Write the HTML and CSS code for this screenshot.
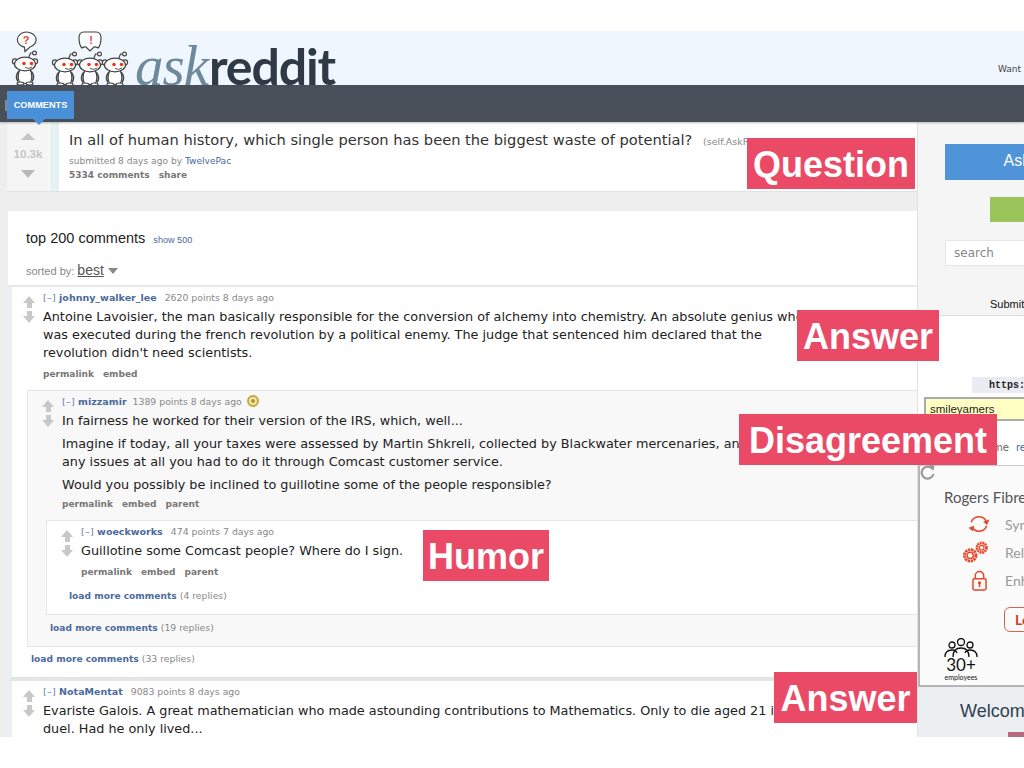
FILE: index.html
```html
<!DOCTYPE html>
<html lang="en">
<head>
<meta charset="utf-8">
<title>AskReddit</title>
<link rel="stylesheet" href="styles.css">
</head>
<body>
<div class="shot">
  <svg width="0" height="0" class="defs">
    <defs>
      <g id="snoo" fill="#fff" stroke="#444" stroke-width="1.200">
        <path d="M3.500 -6 L5.500 -11 L8 -11" fill="none"/>
        <circle cx="9.500" cy="-11" r="1.900"/>
        <path d="M-5 5 C-8 11 -7 17 -4.500 19.500 L4.500 19.500 C7 17 8 11 5 5 Z"/>
        <path d="M-6 7 Q-10.500 12 -7 17.500 M6 7 Q10.500 12 7 17.500" fill="none" stroke-width="1.600"/>
        <ellipse cx="-4.500" cy="19.500" rx="3.500" ry="1.500"/>
        <ellipse cx="4.500" cy="19.500" rx="3.500" ry="1.500"/>
        <circle cx="-10" cy="-2.500" r="2.600"/>
        <circle cx="10" cy="-2.500" r="2.600"/>
        <ellipse cx="0" cy="0" rx="10.500" ry="6.800"/>
        <circle cx="-1" cy="-0.500" r="1.800" fill="#e8391f" stroke="none"/>
        <circle cx="6.500" cy="-0.500" r="1.800" fill="#e8391f" stroke="none"/>
        <path d="M0 3.500 Q4 5.500 7 3" fill="none" stroke-width="0.900"/>
      </g>
    </defs>
  </svg>
  <header class="site-head">
    <svg class="snoos" width="130" height="54" viewBox="0 31 130 54">
      <path class="bubble" d="M26 32 a10 7.800 0 0 1 4 15 l-5 4.500 l-.5 -4.300 a10 7.800 0 0 1 1.500 -15.200 Z"/>
      <text class="bubble-mark" x="26" y="44">?</text>
      <path class="bubble" d="M86 32 h10 q5 0 5 6 q0 7 -3 10 q-3 -1.500 -4 -1 l-4 4 l-4 -4 q-2 -.5 -4 1 q-3 -3 -3 -10 q0 -6 5 -6 Z"/>
      <text class="bubble-mark" x="91" y="44">!</text>
      <use href="#snoo" x="25" y="64"/>
      <use href="#snoo" x="65" y="65"/>
      <use href="#snoo" x="90" y="65"/>
      <use href="#snoo" x="115" y="65"/>
    </svg>
    <div class="wordmark"><span class="wm-ask">ask</span><span class="wm-reddit">reddit</span></div>
    <div class="want">Want to join?</div>
  </header>
  <nav class="site-nav"><span class="nav-stub"></span></nav>
  <a class="tab">COMMENTS</a>

  <div class="page">
    <main class="main">
      <section class="post">
        <div class="post-vote">
          <span class="tri tri-up"></span>
          <span class="score">10.3k</span>
          <span class="tri tri-down"></span>
        </div>
        <div class="post-body">
          <div class="post-title">In all of human history, which single person has been the biggest waste of potential? <span class="domain">(self.AskReddit)</span></div>
          <div class="post-meta">submitted 8 days ago by <a class="link">TwelvePac</a></div>
          <div class="links"><span>5334 comments</span><span>share</span></div>
        </div>
      </section>

      <section class="panel">
        <div class="panel-title">top 200 comments <a class="show">show 500</a></div>
        <div class="sort">sorted by: <u class="sort-val">best</u> <span class="sort-caret"></span></div>
      </section>

      <section class="thread">
        <article class="comment">
          <div class="votes"><span class="arrow"></span><span class="arrow arrow-down"></span></div>
          <div class="entry">
            <div class="tagline"><span class="toggle">[–]</span> <a class="author">johnny_walker_lee</a> <span class="pts">2620 points 8 days ago</span></div>
            <p class="text">Antoine Lavoisier, the man basically responsible for the conversion of alchemy into chemistry. An absolute genius who<br>was executed during the french revolution by a political enemy. The judge that sentenced him declared that the<br>revolution didn't need scientists.</p>
            <div class="links"><span>permalink</span><span>embed</span></div>
          </div>
        </article>

        <div class="child level-1">
          <article class="comment">
            <div class="votes"><span class="arrow"></span><span class="arrow arrow-down"></span></div>
            <div class="entry">
              <div class="tagline"><span class="toggle">[–]</span> <a class="author">mizzamir</a> <span class="pts pts-tight">1389 points 8 days ago</span> <span class="gold"></span></div>
              <p class="text">In fairness he worked for their version of the IRS, which, well...</p>
              <p class="text para">Imagine if today, all your taxes were assessed by Martin Shkreli, collected by Blackwater mercenaries, and<br>any issues at all you had to do it through Comcast customer service.</p>
              <p class="text para">Would you possibly be inclined to guillotine some of the people responsible?</p>
              <div class="links"><span>permalink</span><span>embed</span><span>parent</span></div>
            </div>
          </article>

          <div class="child level-2">
            <article class="comment">
              <div class="votes"><span class="arrow"></span><span class="arrow arrow-down"></span></div>
              <div class="entry">
                <div class="tagline"><span class="toggle">[–]</span> <a class="author">woeckworks</a> <span class="pts">474 points 7 days ago</span></div>
                <p class="text">Guillotine some Comcast people? Where do I sign.</p>
                <div class="links"><span>permalink</span><span>embed</span><span>parent</span></div>
              </div>
            </article>
            <div class="more more-3"><a class="author">load more comments</a> <span class="pts">(4 replies)</span></div>
          </div>
          <div class="more more-2"><a class="author">load more comments</a> <span class="pts">(19 replies)</span></div>
        </div>
        <div class="more more-1"><a class="author">load more comments</a> <span class="pts">(33 replies)</span></div>
      </section>

      <section class="thread thread-next">
        <article class="comment">
          <div class="votes"><span class="arrow"></span><span class="arrow arrow-down"></span></div>
          <div class="entry">
            <div class="tagline"><span class="toggle">[–]</span> <a class="author">NotaMentat</a> <span class="pts">9083 points 8 days ago</span></div>
            <p class="text">Evariste Galois. A great mathematician who made astounding contributions to Mathematics. Only to die aged 21 in a<br>duel. Had he only lived...</p>
          </div>
        </article>
      </section>
    </main>

    <aside class="side">
      <div class="side-top">
        <div class="btn btn-blue">Ask a question</div>
        <div class="btn btn-green">Submit</div>
        <div class="search">search</div>
        <div class="submit-note">Submit a link</div>
      </div>
      <div class="side-mid">
        <div class="url-tab">https://www.reddit.com</div>
        <div class="user-input">smileyamers</div>
        <div class="login-row"><span class="login-a">me</span><span class="login-b">reset</span></div>
      </div>
      <div class="ad">
        <svg class="reload" width="16" height="16" viewBox="0 0 16 16"><path d="M12.500 5 A6 6 0 1 0 13.500 10" fill="none" stroke="#999" stroke-width="2.200"/><path d="M9 1 L14.500 1.500 L13.500 7 Z" fill="#999"/></svg>
        <div class="ad-title">Rogers Fibre Internet</div>
        <div class="ad-row">
          <span class="ad-slot"><svg width="24" height="20" viewBox="0 0 24 22"><path d="M3.500 9 A9 9 0 0 1 20 8 M20.500 13 A9 9 0 0 1 4 14" fill="none" stroke="#e8472b" stroke-width="1.800"/><path d="M16.500 8.500 L23.500 6 L21 12 Z M0.500 15 L7 13 L5 19 Z" fill="#e8472b"/></svg></span>
          <span>Sync</span>
        </div>
        <div class="ad-row">
          <span class="ad-slot"><svg class="gears" width="28" height="23" viewBox="0 0 28 24"><g fill="none" stroke="#e8472b"><circle cx="9" cy="15" r="6" stroke-width="3" stroke-dasharray="2.400 .75"/><circle cx="9" cy="15" r="3.200" stroke-width="1.500"/><circle cx="21" cy="7" r="5" stroke-width="2.800" stroke-dasharray="2 .62"/><circle cx="21" cy="7" r="2.400" stroke-width="1.300"/></g></svg></span>
          <span>Reliable</span>
        </div>
        <div class="ad-row">
          <span class="ad-slot"><svg width="15" height="21" viewBox="0 0 16 22"><g fill="none" stroke="#e8472b" stroke-width="1.600"><path d="M3.500 9 V6 a4.500 4.500 0 0 1 9 0 V9"/><rect x="1" y="9" width="14" height="12" rx="1.500"/></g><rect x="7.200" y="13" width="1.600" height="5" fill="#e8472b"/><circle cx="8" cy="13.500" r="1.700" fill="#e8472b"/></svg></span>
          <span>Enhanced</span>
        </div>
        <div class="ad-btn">Learn more</div>
        <div class="staff">
          <svg width="34" height="20" viewBox="0 0 34 20"><g fill="none" stroke="#111" stroke-width="1.300"><circle cx="17" cy="4" r="3.500"/><circle cx="8" cy="7" r="3"/><circle cx="26" cy="7" r="3"/><path d="M1 19 Q1 12 8 12 Q12 12 13 15 M33 19 Q33 12 26 12 Q22 12 21 15 M9 19 Q9 10 17 10 Q25 10 25 19"/></g></svg>
          <div class="staff-num">30+</div>
          <div class="staff-lbl">employees</div>
        </div>
      </div>
      <div class="welcome">
        <div class="welcome-title">Welcome to AskReddit</div>
        <div class="welcome-block"></div>
      </div>
    </aside>
  </div>

  <div class="tag tag-question">Question</div>
  <div class="tag tag-answer-1">Answer</div>
  <div class="tag tag-disagree">Disagreement</div>
  <div class="tag tag-humor">Humor</div>
  <div class="tag tag-answer-2">Answer</div>
</div>
</body>
</html>
```

FILE: styles.css
```css
* { box-sizing: border-box; }
html, body { margin: 0; padding: 0; background: #fff; }
body { height: 768px; overflow: hidden; font-family: "DejaVu Sans", sans-serif; }
p { margin: 0; }
.defs { position: absolute; }

.shot { position: relative; height: 706px; margin-top: 31px; overflow: hidden; background: #eee; }

/* header */
.site-head { position: relative; display: flex; align-items: flex-end; height: 54px; background: #f0f6fe; overflow: hidden; }
.snoos { flex: none; }
.bubble { fill: #fff; stroke: #444; stroke-width: 1.200; }
.bubble-mark { font: bold 11px "Liberation Sans", sans-serif; fill: #e8452c; text-anchor: middle; }
.wordmark { margin-left: 5px; white-space: nowrap; height: 54px; line-height: 69px; }
.wm-ask { font: italic 57px/69px "Liberation Serif", serif; color: #6d8a9c; letter-spacing: -1px; }
.wm-reddit { margin-left: 1px; font: bold 50px/69px "Lato", sans-serif; color: #2f3a46; letter-spacing: -1.100px; }
.want { margin-left: auto; width: 26px; padding-bottom: 11px; font-size: 9px; color: #444; white-space: nowrap; }

.site-nav { position: relative; height: 37px; background: #484f58; box-shadow: 0 1px 2px rgba(0,0,0,.25); z-index: 2; }
.nav-stub { position: absolute; left: 5px; top: 15px; width: 3px; height: 11px; background: #888; }
.tab { position: absolute; z-index: 3; left: 7px; top: 60px; width: 67px; height: 28px; background: #4a90d9; color: #fff; font: bold 9.200px/28px "Liberation Sans", sans-serif; text-align: center; }
.tab::after { content: ""; position: absolute; left: 26px; top: 28px; border: 6px solid transparent; border-top-color: #4a90d9; border-bottom: 0; }

/* page */
.page { display: flex; height: 615px; }
.main { flex: none; width: 917px; padding-left: 7px; overflow: hidden; }

.post { display: flex; height: 70px; background: #fff; border-bottom: 1px solid #e2e2e2; }
.post-vote { flex: none; display: flex; flex-direction: column; align-items: center; width: 42px; padding-top: 11px; background: #f5f5f5; }
.tri { width: 0; height: 0; border-left: 7px solid transparent; border-right: 7px solid transparent; }
.tri-up { border-bottom: 7px solid #c4c4c4; }
.tri-down { border-top: 8px solid #b8b8b8; }
.score { margin: 8px 0 9px; font: bold 11.500px/13px "Liberation Sans", sans-serif; color: #c6c6c6; }
.post-body { flex: 1; margin-left: 1px; padding: 9px 0 0 10px; border-left: 9px solid #e4f2f2; white-space: nowrap; }
.post-title { height: 20px; font-size: 14.650px; line-height: 18px; color: #333; }
.domain { margin-left: 6px; font-size: 9.500px; color: #888; }
.post-meta { margin-top: 4px; font-size: 9.100px; line-height: 13px; color: #888; }
.link { color: #4a6a9c; }
.links { display: flex; gap: 9px; font-size: 9px; font-weight: bold; line-height: 14px; color: #777; white-space: nowrap; }

.panel { height: 76px; margin: 19px 0 0 1px; padding-top: 18px; background: #fff; border-bottom: 2px solid #e8e8e8; font-family: "Liberation Sans", sans-serif; white-space: nowrap; }
.panel-title { padding-left: 18px; font-size: 14.500px; line-height: 18px; color: #222; }
.show { margin-left: 4px; font-size: 9.100px; color: #4a6a9c; }
.sort { margin-top: 13px; padding-left: 18px; font-size: 11px; line-height: 16px; color: #888; }
.sort-val { font-size: 14px; color: #555; }
.sort-caret { display: inline-block; margin-left: 1px; vertical-align: 1px; border-left: 5px solid transparent; border-right: 5px solid transparent; border-top: 6px solid #888; }

.thread { margin-left: 2px; padding: 0 0 11px 0; background: #fff; border-left: 3px solid #e4f2f5; border-bottom: 4px solid #e4e4e4; white-space: nowrap; }
.thread-next { border-bottom: 0; padding-bottom: 0; }
.comment { display: flex; }
.votes { flex: none; display: flex; flex-direction: column; align-items: center; gap: 1px; width: 31px; padding: 9px 3px 0 6px; }
.child .votes { width: 34px; padding-left: 10px; }
.arrow { position: relative; display: block; width: 13px; height: 13px; }
.arrow::before { content: ""; position: absolute; left: 0; top: 0; border-left: 6.500px solid transparent; border-right: 6.500px solid transparent; border-bottom: 7px solid #c8c8c8; }
.arrow::after { content: ""; position: absolute; left: 4px; top: 7px; width: 5px; height: 5px; background: #c8c8c8; }
.arrow-down { transform: scaleY(-1); }
.entry { padding-top: 4px; }
.tagline { font-size: 9.500px; line-height: 14px; color: #888; }
.toggle { color: #6b83a8; letter-spacing: 0.3px; }
.author { font-weight: bold; color: #4a6a9c; }
.pts { margin-left: 5px; font-size: 9.300px; color: #888; }
.pts-tight { margin-left: 3px; }
.more .author { font-size: 9.100px; }
.more .pts { margin-left: 0; font-size: 9.300px; }
.gold { display: inline-block; width: 12px; height: 12px; margin-left: 2px; vertical-align: -2px; border-radius: 50%; background: radial-gradient(circle, #a8923a 0 1.500px, #f3e39a 2px 100%); border: 2px solid #c2a945; }
.text { margin-top: 3px; font-size: 12.800px; line-height: 18px; color: #222; }
.para { margin-top: 5px; }
.entry .links { margin-top: 5px; }
.level-1 > .comment .links { margin-top: 3px; }
.level-2 .comment .links { margin-top: 5px; }

.child { margin-top: 9px; }
.level-1 { margin-left: 15px; padding-bottom: 11px; background: #f8f8f8; border: 1px solid #e6e6e6; border-right: 0; }
.level-2 { margin-left: 18px; margin-top: 9px; padding-bottom: 11px; background: #fff; border: 1px solid #e6e6e6; border-right: 0; }
.more { font-size: 9.500px; line-height: 14px; }
.more-3 { margin: 10px 0 0 22px; }
.more-2 { margin: 6px 0 0 22px; }
.more-1 { margin: 5px 0 0 19px; }

/* sidebar */
.side { flex: none; width: 107px; overflow: hidden; background: #f5f5f5; border-left: 1px solid #e2e2e2; white-space: nowrap; }
.side-top { height: 194px; padding-top: 22px; font-family: "Liberation Sans", sans-serif; border-bottom: 1px solid #ddd; }
.btn { color: #fff; text-align: center; }
.btn-blue { width: 222px; height: 36px; margin-left: 27px; background: #4f94d8; font-size: 16px; line-height: 34px; }
.btn-green { width: 102px; height: 25px; margin: 17px 0 0 72px; background: #9bc45a; color: #b8d88a; font-size: 11px; line-height: 25px; }
.search { width: 120px; height: 26px; margin: 18px 0 0 27px; padding-left: 8px; background: #fff; border: 1px solid #e6e6e6; font: 12px/24px "DejaVu Sans", sans-serif; color: #888; }
.submit-note { margin: 32px 0 0 72px; font-size: 11px; line-height: 13px; color: #111; }
.side-mid { height: 149px; padding-top: 61px; background: #fff; }
.url-tab { height: 16px; margin-left: 54px; padding-left: 17px; background: #e9edf3; font: bold 10px/18px "Liberation Mono", monospace; color: #222; overflow: hidden; }
.user-input { height: 24px; margin: 4px 0 0 6px; padding: 3px 0 0 4px; background: #ffffc4; border: 2px solid #aaa; border-right: 0; font: 11.500px/14px "Liberation Sans", sans-serif; color: #222; }
.login-row { display: flex; margin: 20px 0 0 75px; font-size: 10px; line-height: 14px; color: #666; }
.login-b { margin-left: 7px; color: #4a6a9c; }
.ad { position: relative; height: 222px; padding: 22px 0 0 24px; background: #fbfbfb; border-left: 2px solid #b5b5b5; border-top: 1px solid #ccc; border-bottom: 2px solid #b5b5b5; font-family: "Lato", sans-serif; }
.reload { position: absolute; left: 0; top: -2px; }
.ad-title { font-size: 15px; line-height: 18px; color: #555; }
.ad-row { display: flex; align-items: center; gap: 3px; height: 28px; margin-left: 12px; font-size: 14px; color: #999; }
.ad-row:nth-of-type(2) { margin-top: 4px; }
.ad-slot { flex: none; display: flex; align-items: center; justify-content: center; width: 46px; }
.gears { margin-right: 8px; }
.ad-btn { width: 110px; height: 25px; margin: 13px 0 0 60px; padding-left: 10px; border: 1px solid #d9604c; border-radius: 6px; font-size: 14px; font-weight: bold; line-height: 23px; color: #c9402c; }
.staff { margin-top: 6px; width: 34px; text-align: center; }
.staff svg { display: block; }
.staff-num { margin-top: -2px; font-size: 17px; line-height: 17px; color: #111; }
.staff-lbl { font-size: 7px; line-height: 8px; color: #111; }
.welcome { height: 50px; padding: 14px 0 0 42px; background: #ebeff2; font-family: "Liberation Sans", sans-serif; }
.welcome-title { font-size: 18px; line-height: 20px; color: #2f4050; }
.welcome-block { width: 40px; height: 10px; margin: 11px 0 0 48px; background: #b86a7d; }

/* annotation tags */
.tag { position: absolute; z-index: 5; height: 51px; background: #ea4a66; color: #fff; font: bold 36px/54px "Liberation Sans", sans-serif; text-align: center; white-space: nowrap; overflow: hidden; }
.tag-question { left: 747px; top: 107px; width: 168px; }
.tag-answer-1 { left: 797px; top: 279px; width: 142px; }
.tag-disagree { left: 739px; top: 383px; width: 258px; }
.tag-humor { left: 423px; top: 499px; width: 126px; }
.tag-answer-2 { left: 774px; top: 641px; width: 143px; }
```
